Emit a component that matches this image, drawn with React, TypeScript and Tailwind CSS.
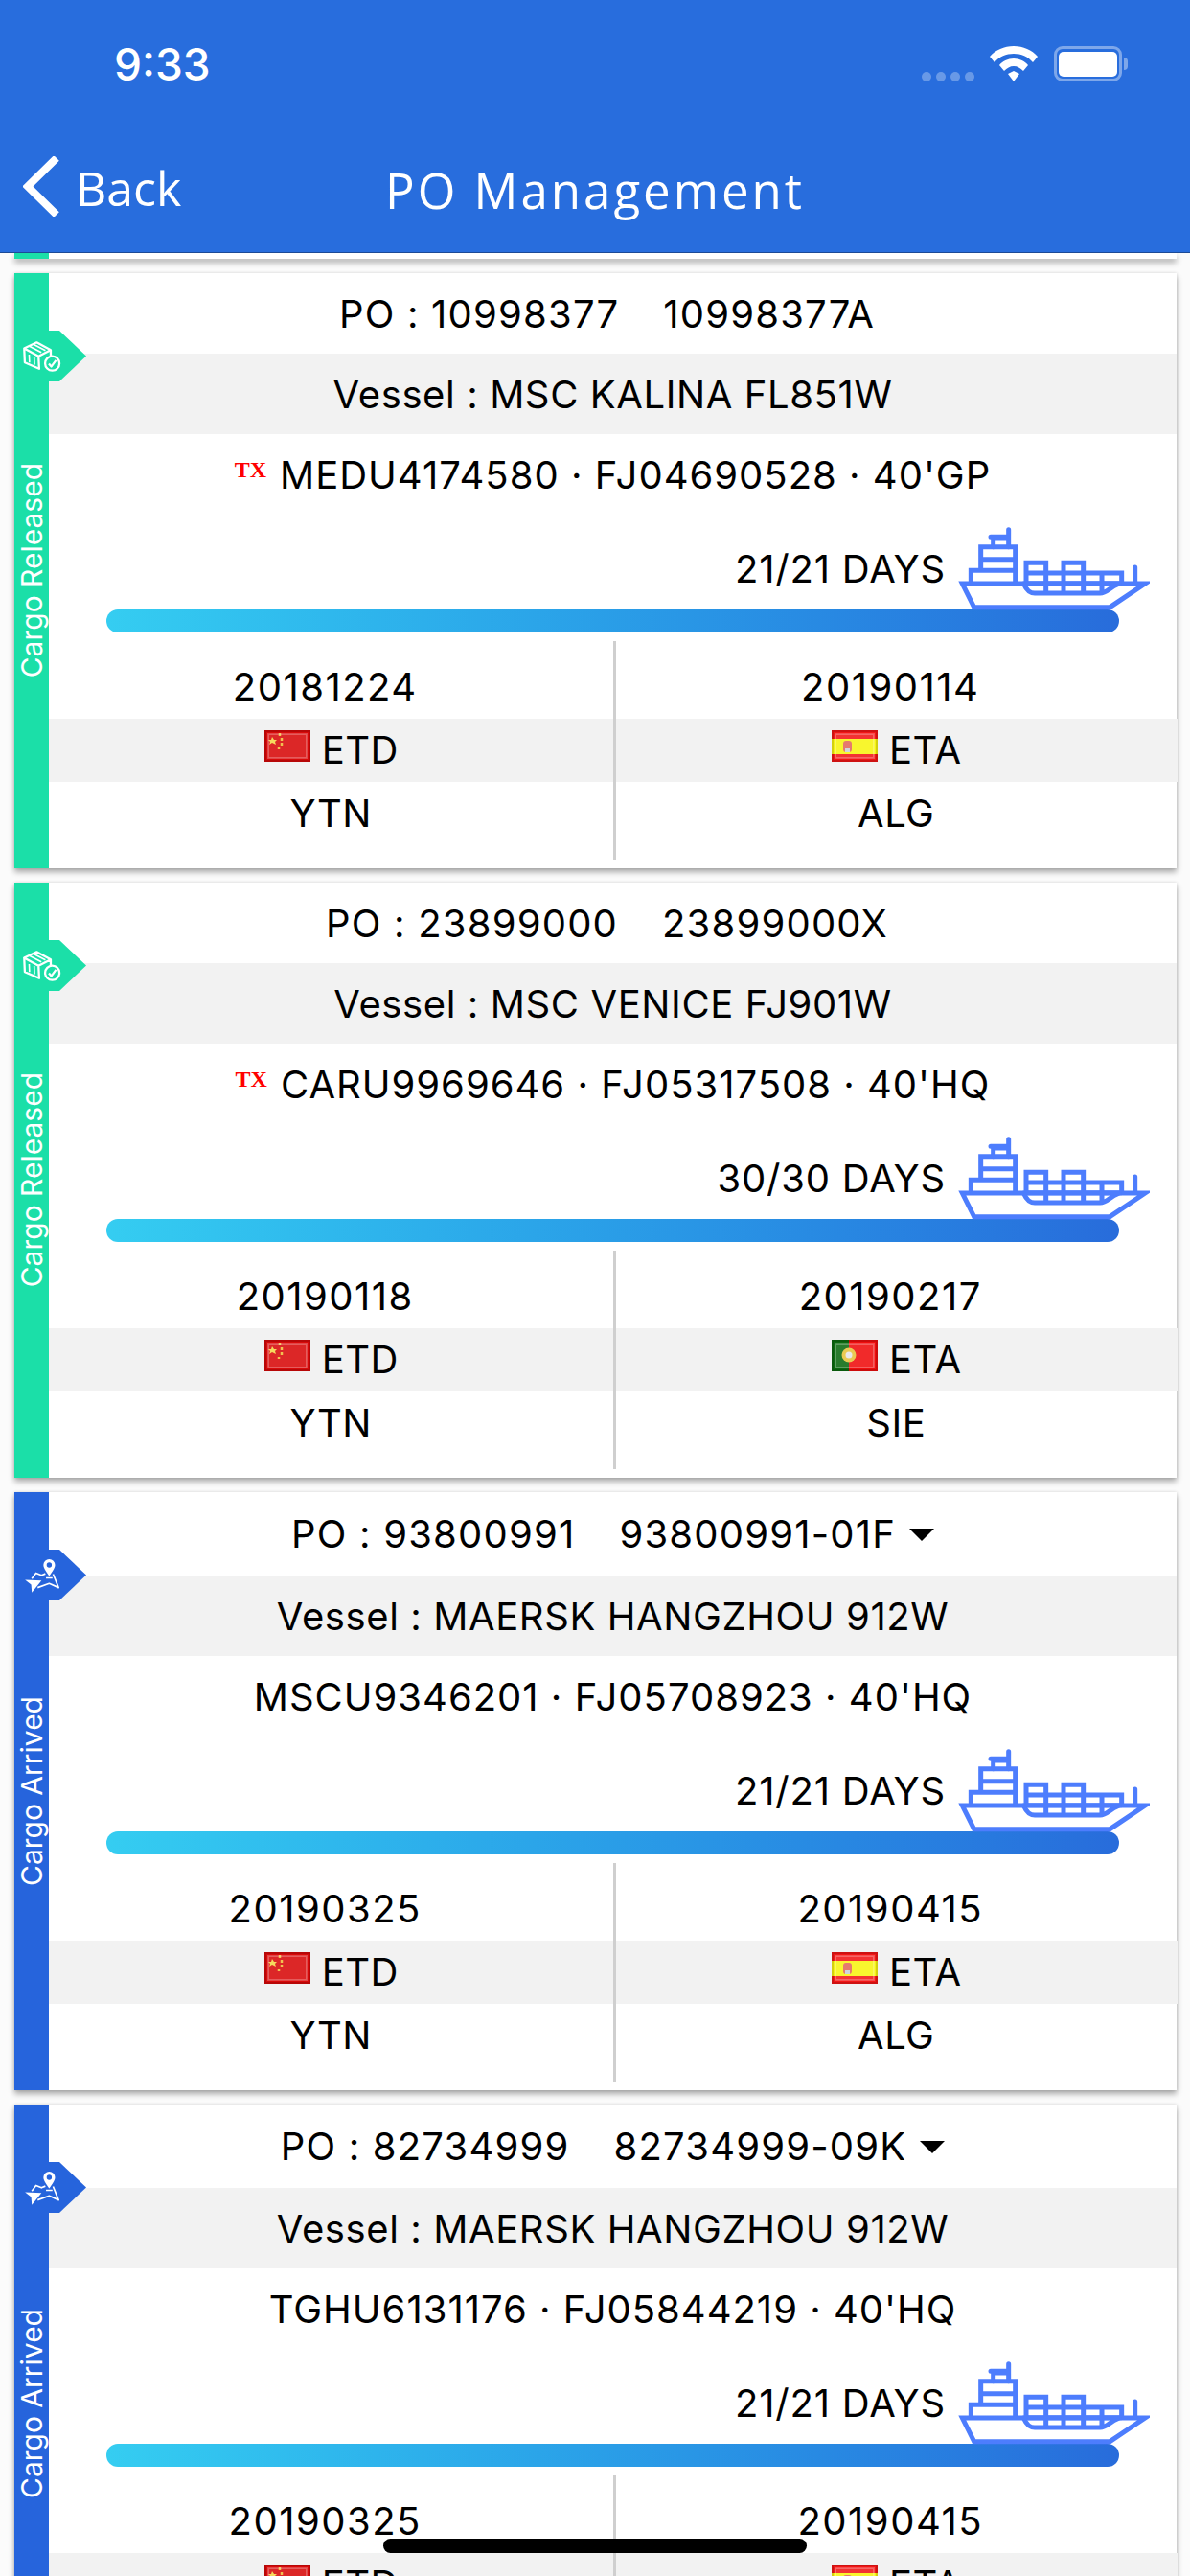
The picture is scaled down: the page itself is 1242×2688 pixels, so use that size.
import React from "react";

type Flag = "cn" | "es" | "pt";

type Order = {
  status: "released" | "arrived";
  po: string;
  ref: string;
  menu?: boolean;
  vessel: string;
  tx?: boolean;
  container: string;
  days: string;
  etd: string;
  eta: string;
  etaFlag: Flag;
  from: string;
  to: string;
};

const orders: Order[] = [
  {
    status: "released",
    po: "10998377",
    ref: "10998377A",
    vessel: "MSC KALINA FL851W",
    tx: true,
    container: "MEDU4174580 · FJ04690528 · 40'GP",
    days: "21/21 DAYS",
    etd: "20181224",
    eta: "20190114",
    etaFlag: "es",
    from: "YTN",
    to: "ALG",
  },
  {
    status: "released",
    po: "23899000",
    ref: "23899000X",
    vessel: "MSC VENICE FJ901W",
    tx: true,
    container: "CARU9969646 · FJ05317508 · 40'HQ",
    days: "30/30 DAYS",
    etd: "20190118",
    eta: "20190217",
    etaFlag: "pt",
    from: "YTN",
    to: "SIE",
  },
  {
    status: "arrived",
    po: "93800991",
    ref: "93800991-01F",
    menu: true,
    vessel: "MAERSK HANGZHOU 912W",
    container: "MSCU9346201 · FJ05708923 · 40'HQ",
    days: "21/21 DAYS",
    etd: "20190325",
    eta: "20190415",
    etaFlag: "es",
    from: "YTN",
    to: "ALG",
  },
  {
    status: "arrived",
    po: "82734999",
    ref: "82734999-09K",
    menu: true,
    vessel: "MAERSK HANGZHOU 912W",
    container: "TGHU6131176 · FJ05844219 · 40'HQ",
    days: "21/21 DAYS",
    etd: "20190325",
    eta: "20190415",
    etaFlag: "es",
    from: "YTN",
    to: "ALG",
  },
];

function FlagIcon({ flag }: { flag: Flag }) {
  return (
    <svg width="48" height="33" viewBox="0 0 48 33" className="shrink-0">
      {flag === "cn" && (
        <>
          <rect width="48" height="33" fill="#d80a0a" />
          <path d="M8 7l2 3 3 0-2 2 1 3-4-2-3 2 1-3-2-2 3 0z" fill="#f5d547" />
          <path d="M16 3v3M18 8v3M18 13v3M15 18v2" stroke="#f0b93a" strokeWidth="2.5" />
        </>
      )}
      {flag === "es" && (
        <>
          <rect width="48" height="33" fill="#f21616" />
          <rect y="9" width="48" height="16" fill="#f7f512" />
          <rect x="12" y="11" width="9" height="12" rx="3" fill="#e2685a" />
          <rect x="14" y="19" width="5" height="4" fill="#c9d0d8" />
        </>
      )}
      {flag === "pt" && (
        <>
          <rect width="48" height="33" fill="#f00d0d" />
          <rect width="18" height="33" fill="#0c6a10" />
          <circle cx="18" cy="16" r="7.5" fill="#e8c33c" />
          <circle cx="18" cy="16" r="3.5" fill="#e6e6ea" />
        </>
      )}
      <rect x="1" y="1" width="46" height="31" fill="none" stroke="#000" strokeOpacity="0.15" strokeWidth="2" />
      <rect x="4" y="4" width="40" height="25" fill="#fff" fillOpacity="0.12" stroke="#fff" strokeOpacity="0.25" strokeWidth="2" />
    </svg>
  );
}

function Ship() {
  return (
    <svg
      width="200"
      height="90"
      viewBox="300 90 600 270"
      fill="none"
      stroke="#4d7dfd"
      strokeWidth="15"
      strokeLinecap="round"
      className="absolute right-[28px] bottom-[-2px]"
    >
      <path d="M313 273H885L775 347H350Z" strokeLinejoin="miter" fill="#fff" />
      <path d="M505 273C515 296 525 303 540 303H745C765 303 775 285 800 275" />
      <path d="M371 232V158H479V270M371 197H479M340 270V232H479" strokeLinecap="butt" />
      <path d="M410 158V132H458M458 104V158M402 127H458" />
      <path d="M513 270V208H575V300M630 300V208H692V300M513 240H812V270M513 272H812M750 240V300" strokeLinecap="butt" />
      <path d="M854 222V270" />
    </svg>
  );
}

function ContainerIcon() {
  return (
    <svg width="44" height="38" viewBox="60 250 135 112" fill="none" stroke="#fff" strokeWidth="7" strokeLinejoin="round">
      <path d="M70 280L110 261L155 285L116 305ZM70 280L72 325L118 345L116 305M155 285V306" />
      <path d="M85 272L125 293M98 266L138 287M86 300L87 325M102 306L103 332" strokeWidth="5" />
      <circle cx="160" cy="328" r="23" />
      <path d="M149 329L157 338L172 318" />
    </svg>
  );
}

function ArrivedIcon() {
  return (
    <svg width="38" height="37" viewBox="68 255 112 110" fill="none" stroke="#fff" strokeWidth="5" strokeLinejoin="round">
      <path fillRule="evenodd" stroke="none" fill="#fff" d="M146 258a18 18 0 0 1 18 18c0 11-11 24-18 34c-7-10-18-23-18-34a18 18 0 0 1 18-18zm0 10a8 8 0 1 0 0 16a8 8 0 0 0 0-16z" />
      <path d="M92 318L105 301L122 308L134 303M158 304L175 346L146 333L110 346M136 316H156" />
      <path stroke="none" fill="#fff" d="M71 322L122 324L92 361L90 337Z" />
    </svg>
  );
}

function Card({ order }: { order: Order }) {
  const released = order.status === "released";
  return (
    <div className="relative flex bg-white shadow-[0_4px_6px_rgba(0,0,0,0.32),0_0_3px_rgba(0,0,0,0.12)]">
      <div
        className={`flex w-[36px] shrink-0 items-center justify-center ${released ? "bg-[#1bdfa8]" : "bg-[#2664dc]"}`}
      >
        <span className="rotate-180 text-[30px] leading-none text-white [writing-mode:vertical-rl]">
          {released ? "Cargo Released" : "Cargo Arrived"}
        </span>
      </div>

      <div
        className={`absolute top-[60px] left-[36px] z-10 h-[53px] w-[39px] [clip-path:polygon(0_0,11px_0,39px_50%,11px_100%,0_100%)] ${released ? "bg-[#1bdfa8]" : "bg-[#2664dc]"}`}
      />
      <div className="absolute top-[67px] left-[7px] z-20 flex h-[40px] w-[44px] items-center justify-center">
        {released ? <ContainerIcon /> : <ArrivedIcon />}
      </div>

      <div className="min-w-0 flex-1 text-center text-[40px] text-black">
        <div className={`flex items-center justify-center gap-[46px] tracking-[1.2px] ${order.menu ? "h-[87px]" : "h-[84px] pt-[2px] pr-[12px]"}`}>
          <span>PO : {order.po}</span>
          <span className="flex items-center gap-[14px]">
            {order.ref}
            {order.menu && <span className="mt-[2px] h-0 w-0 border-x-[13px] border-t-[13px] border-x-transparent border-t-black" />}
          </span>
        </div>
        <div className="flex h-[84px] items-center justify-center bg-[#f2f2f2] pt-[2px] tracking-[0.6px]">Vessel : {order.vessel}</div>
        <div className="flex h-[84px] items-center justify-center gap-[14px] pt-[2px] tracking-[1px]">
          {order.tx && (
            <span className="mb-[12px] text-[24px] leading-none font-bold tracking-normal text-[#ff0000] [font-family:'Liberation_Serif',serif]">TX</span>
          )}
          <span>{order.container}</span>
        </div>

        <div className="relative mt-[15px] mr-[241px] h-[84px] text-right leading-[84px] tracking-[0.8px]">{order.days}</div>
        <div className="relative mx-[60px] h-[24px] rounded-full bg-gradient-to-r from-[#35cdf1] to-[#286cdb]" />
        <div className="relative -mt-[24px] h-0">
          <div className="absolute right-0 bottom-0">
            <Ship />
          </div>
        </div>

        <div className="mt-[33px] grid grid-cols-2 pb-[9px] tracking-[0.5px]">
          <Port date={order.etd} flag="cn" label="ETD" place={order.from} />
          <Port date={order.eta} flag={order.etaFlag} label="ETA" place={order.to} divider />
        </div>
      </div>
    </div>
  );
}

function Port({
  date,
  flag,
  label,
  place,
  divider,
}: {
  date: string;
  flag: Flag;
  label: string;
  place: string;
  divider?: boolean;
}) {
  return (
    <div className={`py-[15px] ${divider ? "border-l-[3px] border-[#cfcfcf]" : ""}`}>
      <div className="h-[66px] pr-[12px] leading-[66px] tracking-[1.5px]">{date}</div>
      <div className="-mr-px flex h-[66px] items-center justify-center gap-[12px] bg-[#f2f2f2]">
        <span className="-mt-[9px]">
          <FlagIcon flag={flag} />
        </span>
        <span>{label}</span>
      </div>
      <div className="h-[66px] leading-[66px]">{place}</div>
    </div>
  );
}

export default function App() {
  return (
    <div className="relative h-[2688px] w-[1242px] overflow-hidden bg-[#fbfbfb] [font-family:Inter,sans-serif]">
      <header className="relative z-30 h-[264px] border-b border-[#1c4a96] bg-[#286ddd] text-white">
        <div className="flex h-[134px] items-start justify-between pt-[40px] pr-[71px] pl-[119px]">
          <span className="text-[46px] leading-[54px] font-medium">9:33</span>
          <div className="flex items-center pt-[8px]">
            <div className="mt-[26px] mr-[16px] flex gap-[5px]">
              <span className="h-[10px] w-[10px] rounded-full bg-white/30" />
              <span className="h-[10px] w-[10px] rounded-full bg-white/30" />
              <span className="h-[10px] w-[10px] rounded-full bg-white/30" />
              <span className="h-[10px] w-[10px] rounded-full bg-white/30" />
            </div>
            <svg width="50" height="37" viewBox="0 0 50 37" fill="#fff" className="mr-[17px]">
              <path d="M25 0C15 0 6 4 0 11l5 6c5-6 12-9 20-9s15 3 20 9l5-6C44 4 35 0 25 0z" />
              <path d="M25 13c-6 0-12 3-15 7l5 6c3-3 6-5 10-5s7 2 10 5l5-6c-3-4-9-7-15-7z" />
              <path d="M25 26l-6 3 6 8 6-8z" />
            </svg>
            <div className="relative flex h-[37px] w-[71px] items-center justify-center rounded-[9px] border-[3px] border-white/40">
              <span className="h-[26px] w-[61px] rounded-[5px] bg-white" />
              <span className="absolute top-[9px] -right-[9px] h-[13px] w-[4px] rounded-r-full bg-white/40" />
            </div>
          </div>
        </div>

        <div className="relative flex h-[120px] items-center justify-center">
          <div className="absolute top-[29px] left-[24px] flex items-center gap-[17px]">
            <svg width="38" height="63" viewBox="0 0 38 63" fill="none" stroke="#fff" strokeWidth="8">
              <path d="M35 2L5 31.5L35 61" />
            </svg>
            <span className="mt-[2px] text-[50px] leading-none [font-family:'Open_Sans',sans-serif]">Back</span>
          </div>
          <span className="mt-[8px] text-[51px] tracking-[3px] [font-family:'Open_Sans',sans-serif]">PO Management</span>
        </div>
      </header>

      <main className="flex flex-col gap-[15px] pr-[14px] pl-[15px]">
        <div className="flex h-[6px] bg-white shadow-[0_4px_6px_rgba(0,0,0,0.32)]">
          <div className="w-[36px] bg-[#1bdfa8]" />
        </div>
        {orders.map((order) => (
          <Card key={order.po} order={order} />
        ))}
      </main>

      <div className="absolute top-[2649px] left-[400px] z-40 h-[15px] w-[442px] rounded-full bg-black" />
    </div>
  );
}
